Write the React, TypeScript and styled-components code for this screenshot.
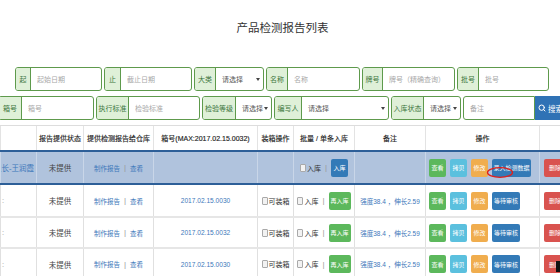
import React from 'react';
import styled, { createGlobalStyle } from 'styled-components';
import { Search } from 'lucide-react';

const Global = createGlobalStyle`
  html, body { margin: 0; padding: 0; background: #fff; }
  body {
    width: 560px; height: 276px; overflow: hidden;
    font-family: "Liberation Sans", "Noto Sans CJK SC", sans-serif;
    color: #333;
  }
`;

const GREEN = '#5e9a4c';
const CJK = '"Liberation Sans", "Noto Sans CJK SC", sans-serif';

const Page = styled.div`
  position: relative;
  width: 560px;
  height: 276px;
  overflow: hidden;
`;

const Title = styled.h1`
  margin: 0 0 31px;
  padding: 20px 0 0 5px;
  height: 16px;
  line-height: 16px;
  font-size: 11.5px;
  font-weight: normal;
  text-align: center;
  color: #333;
  font-family: ${CJK};
`;

const FilterRow = styled.div<{ $offset: number; $top?: number }>`
  display: flex;
  gap: 2px;
  height: 24px;
  margin-left: ${p => p.$offset}px;
  margin-top: ${p => p.$top ?? 0}px;
`;

const Group = styled.div<{ $w: number }>`
  display: flex;
  flex: none;
  width: ${p => p.$w}px;
  box-sizing: border-box;
  border: 1px solid ${GREEN};
  border-radius: 3px;
  overflow: hidden;
  background: #fff;
`;

const Addon = styled.span<{ $w: number }>`
  flex: none;
  width: ${p => p.$w}px;
  box-sizing: border-box;
  background: #dff0d8;
  color: #3c763d;
  border-right: 1px solid ${GREEN};
  font-size: 7px;
  font-family: ${CJK};
  display: flex;
  align-items: center;
  justify-content: center;
  white-space: nowrap;
`;

const Field = styled.input`
  flex: 1;
  min-width: 0;
  border: none;
  outline: none;
  background: transparent;
  padding: 0 0 0 6px;
  font-size: 7px;
  font-family: ${CJK};
  color: #555;
  &::placeholder { color: #a8a8a8; }
`;

const Select = styled.div`
  flex: 1;
  min-width: 0;
  display: flex;
  align-items: center;
  justify-content: space-between;
  padding: 0 3px 0 6px;
  font-size: 7px;
  font-family: ${CJK};
  color: #555;
  white-space: nowrap;
`;

const Caret = styled.span`
  flex: none;
  width: 0;
  height: 0;
  border-left: 2px solid transparent;
  border-right: 2px solid transparent;
  border-top: 3px solid #444;
`;

const NoteBox = styled.div`
  display: flex;
  flex: none;
  width: 115px;
`;

const NoteField = styled(Field)`
  flex: none;
  width: 72px;
  box-sizing: border-box;
  border: 1px solid ${GREEN};
  border-radius: 3px 0 0 3px;
`;

const SearchButton = styled.button`
  flex: 1;
  display: flex;
  align-items: center;
  gap: 2px;
  padding: 0 0 0 3px;
  border: none;
  background: #2f72b5;
  color: #fff;
  font-size: 7.5px;
  font-family: ${CJK};
  white-space: nowrap;
  overflow: hidden;
`;

const Table = styled.table`
  margin-top: 5px;
  width: 580px;
  table-layout: fixed;
  border-collapse: collapse;
`;

const Th = styled.th`
  height: 24px;
  padding: 0;
  border-top: 1px solid #ddd;
  border-left: 1px solid #e3e3e3;
  font-size: 7px;
  font-weight: normal;
  color: #222;
  font-family: ${CJK};
  white-space: nowrap;
  text-align: center;
  -webkit-text-stroke: 0.15px #222;
`;

const Tr = styled.tr<{ $active?: boolean; $h: number }>`
  background: ${p => (p.$active ? '#b0c3dd' : '#fff')};
  & > td {
    height: ${p => p.$h}px;
    border-top: 2px solid ${p => (p.$active ? '#2d5f98' : '#e6e6e6')};
    border-bottom: 2px solid ${p => (p.$active ? '#2d5f98' : '#e6e6e6')};
    border-left: 1px solid ${p => (p.$active ? '#c9d6e8' : '#e0e0e0')};
  }
`;

const Td = styled.td`
  padding: 0;
  text-align: center;
  vertical-align: middle;
  font-size: 7.5px;
  font-family: ${CJK};
  color: #444;
  white-space: nowrap;
  overflow: hidden;
`;

const Clip = styled.div<{ $pad?: number }>`
  display: flex;
  justify-content: flex-end;
  overflow: hidden;
  padding-right: ${p => p.$pad ?? 2}px;
`;

const Stub = styled.div`
  text-align: left;
  padding-left: 1px;
  color: #999;
  font-size: 7.5px;
`;

const Link = styled.span<{ $size?: number }>`
  color: #3d78ba;
  font-size: ${p => p.$size ?? 6.5}px;
  font-family: ${CJK};
`;

const Pipe = styled.span`
  color: #999;
  margin: 0 4px;
  font-size: 8px;
`;

const Inline = styled.div<{ $gap?: number; $start?: boolean; $pad?: number }>`
  display: flex;
  align-items: center;
  justify-content: ${p => (p.$start ? 'flex-start' : 'center')};
  gap: ${p => p.$gap ?? 0}px;
  padding-left: ${p => p.$pad ?? 0}px;
`;

const Check = styled.span`
  display: inline-block;
  width: 4px;
  height: 6px;
  margin-right: 1px;
  border: 1px solid #a9a9a9;
  border-radius: 1px;
  background: #f2f2f2;
`;

const Plain = styled.span<{ $size?: number }>`
  font-size: ${p => p.$size ?? 7}px;
  color: #333;
`;

const Btn = styled.button<{ $c: string; $w: number }>`
  flex: none;
  display: inline-flex;
  align-items: center;
  justify-content: center;
  width: ${p => p.$w}px;
  height: 18px;
  padding: 0;
  border: none;
  border-radius: 2px;
  background: ${p => p.$c};
  color: #fff;
  font-size: 6px;
  font-family: ${CJK};
  white-space: nowrap;
  overflow: hidden;
`;

const Ellipse = styled.svg`
  position: absolute;
  left: 486px;
  top: 166px;
`;

const Cursor = styled.div`
  position: absolute;
  left: 556px;
  top: 261px;
  width: 4px;
  height: 11px;
  background: #111;
`;

const C = {
  green: '#5cb85c',
  cyan: '#5bc0de',
  orange: '#f0ad4e',
  blue: '#337ab7',
  red: '#d9534f',
};

const cols = [36, 47, 70, 104, 36, 61, 71, 114, 41];

const headers = ['', '报告提供状态', '提供检测报告给仓库', '箱号(MAX:2017.02.15.0032)', '装箱操作', '批量 / 单条入库', '备注', '操作', ''];

const rows = [
  { box: '2017.02.15.0030', h: 31 },
  { box: '2017.02.15.0032', h: 29 },
  { box: '2017.02.15.0030', h: 30 },
];

function ReportLinks() {
  return (
    <Inline>
      <Link>制作报告</Link>
      <Pipe>|</Pipe>
      <Link>查看</Link>
    </Inline>
  );
}

function Ops({ last }: { last: string }) {
  return (
    <Inline $gap={4} $start $pad={3}>
      <Btn $c={C.green} $w={17}>查看</Btn>
      <Btn $c={C.cyan} $w={17}>拷贝</Btn>
      <Btn $c={C.orange} $w={17}>修改</Btn>
      <Btn $c={C.blue} $w={last.length > 4 ? 39 : 28}>{last}</Btn>
    </Inline>
  );
}

function Store({ again }: { again?: boolean }) {
  return (
    <Inline>
      <Check />
      <Plain>入库</Plain>
      <Pipe>|</Pipe>
      {again ? <Btn $c={C.green} $w={22}>再入库</Btn> : <Btn $c={C.blue} $w={17}>入库</Btn>}
    </Inline>
  );
}

function Del() {
  return (
    <Inline $start $pad={4}>
      <Btn $c={C.red} $w={22}>删除</Btn>
    </Inline>
  );
}

export default function App() {
  return (
    <Page>
      <Global />
      <Title>产品检测报告列表</Title>

      <FilterRow $offset={15}>
        <Group $w={87}><Addon $w={15}>起</Addon><Field placeholder="起始日期" /></Group>
        <Group $w={88}><Addon $w={16}>止</Addon><Field placeholder="截止日期" /></Group>
        <Group $w={70}><Addon $w={21}>大类</Addon><Select>请选择<Caret /></Select></Group>
        <Group $w={94}><Addon $w={21}>名称</Addon><Field placeholder="名称" /></Group>
        <Group $w={93}><Addon $w={20}>牌号</Addon><Field placeholder="牌号（精确查询）" /></Group>
        <Group $w={92}><Addon $w={21}>批号</Addon><Field placeholder="批号" /></Group>
      </FilterRow>

      <FilterRow $offset={-2} $top={5}>
        <Group $w={96}><Addon $w={23}>箱号</Addon><Field placeholder="箱号" /></Group>
        <Group $w={104}><Addon $w={32}>执行标准</Addon><Field placeholder="检验标准" /></Group>
        <Group $w={70}><Addon $w={33}>检验等级</Addon><Select>请选择<Caret /></Select></Group>
        <Group $w={115}><Addon $w={27}>编写人</Addon><Select>请选择<Caret /></Select></Group>
        <Group $w={70}><Addon $w={32}>入库状态</Addon><Select>请选择<Caret /></Select></Group>
        <NoteBox>
          <NoteField placeholder="备注" />
          <SearchButton><Search size={8} strokeWidth={3} />搜索</SearchButton>
        </NoteBox>
      </FilterRow>

      <Table>
        <colgroup>
          {cols.map((w, i) => <col key={i} style={{ width: w }} />)}
        </colgroup>
        <thead>
          <tr>
            {headers.map((h, i) => <Th key={i}>{h}</Th>)}
          </tr>
        </thead>
        <tbody>
          <Tr $active $h={31}>
            <Td><Clip><Link $size={7.5}>组长-王润霞</Link></Clip></Td>
            <Td>未提供</Td>
            <Td><ReportLinks /></Td>
            <Td />
            <Td />
            <Td><Store /></Td>
            <Td />
            <Td><Ops last="录入检测数据" /></Td>
            <Td><Del /></Td>
          </Tr>
          {rows.map((r, i) => (
            <Tr key={i} $h={r.h}>
              <Td><Stub>:</Stub></Td>
              <Td>未提供</Td>
              <Td><ReportLinks /></Td>
              <Td><Link $size={6.6}>{r.box}</Link></Td>
              <Td><Inline><Check /><Plain>可装箱</Plain></Inline></Td>
              <Td><Store again /></Td>
              <Td><Link $size={6.5}>强度38.4 ，伸长2.59</Link></Td>
              <Td><Ops last="等待审核" /></Td>
              <Td><Del /></Td>
            </Tr>
          ))}
        </tbody>
      </Table>

      <Ellipse width="28" height="13" viewBox="0 0 28 13">
        <ellipse cx="14" cy="6.5" rx="12.5" ry="4.8" fill="none" stroke="#e0201c" strokeWidth="1.3" />
      </Ellipse>
      <Cursor />
    </Page>
  );
}
